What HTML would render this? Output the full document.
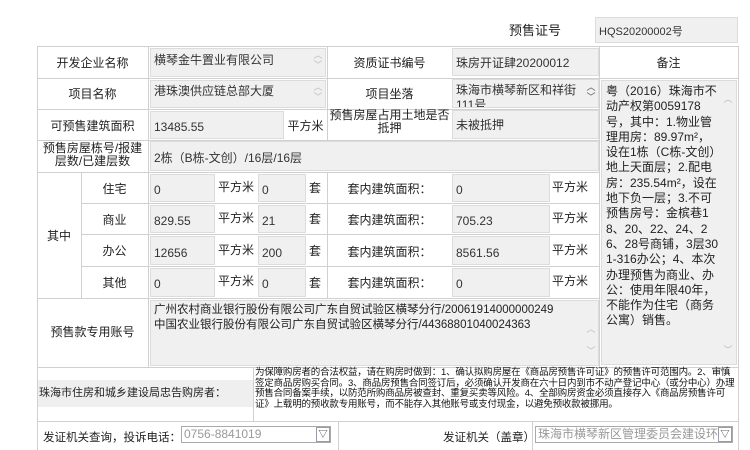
<!DOCTYPE html>
<html><head><meta charset="utf-8"><style>
*{margin:0;padding:0;box-sizing:border-box}
body{width:750px;height:450px;background:#fff;position:relative;overflow:hidden;font-family:"Liberation Sans","Noto Sans CJK SC",sans-serif;font-size:12px;color:#222}
.a{position:absolute}
.h{position:absolute;height:1px;background:#d0d0d0}
.v{position:absolute;width:1px;background:#d0d0d0}
.in{position:absolute;background:#f0f0f0;border:1px solid #dcdcdc;color:#333;padding-left:3px;white-space:nowrap;overflow:hidden}
.c{position:absolute;text-align:center;white-space:nowrap}
.sb{position:absolute;color:#bbb;font-size:9px;line-height:10px;text-align:center;width:12px}
</style></head><body>
<div class="c" style="left:500px;top:20px;width:70px;font-size:13px">预售证号</div>
<div class="in" style="left:595px;top:17px;width:143px;height:26px;line-height:28px;font-size:11px">HQS20200002号</div>

<div class="h" style="left:37px;top:46px;width:702px"></div>
<div class="h" style="left:37px;top:78px;width:702px"></div>
<div class="h" style="left:37px;top:109px;width:562px"></div>
<div class="h" style="left:37px;top:140px;width:562px"></div>
<div class="h" style="left:37px;top:172px;width:562px"></div>
<div class="h" style="left:81px;top:203px;width:518px"></div>
<div class="h" style="left:81px;top:234px;width:518px"></div>
<div class="h" style="left:81px;top:266px;width:518px"></div>
<div class="h" style="left:37px;top:298px;width:562px"></div>
<div class="h" style="left:37px;top:367px;width:702px"></div>
<div class="h" style="left:37px;top:421px;width:702px"></div>
<div class="v" style="left:37px;top:46px;height:404px"></div>
<div class="v" style="left:738px;top:46px;height:404px"></div>
<div class="v" style="left:148px;top:46px;height:321px"></div>
<div class="v" style="left:81px;top:172px;height:126px"></div>
<div class="v" style="left:327px;top:46px;height:94px"></div>
<div class="v" style="left:327px;top:172px;height:126px"></div>
<div class="v" style="left:599px;top:46px;height:321px"></div>
<div class="v" style="left:253px;top:367px;height:54px"></div>
<div class="v" style="left:338px;top:421px;height:29px"></div>
<div class="v" style="left:532px;top:421px;height:29px"></div>

<div class="c" style="left:37px;top:54px;width:111px">开发企业名称</div>
<div class="in" style="left:150px;top:48px;width:176px;height:29px;line-height:22px">横琴金牛置业有限公司</div>
<div class="sb" style="left:312px;top:50px">︿<br>﹀</div>
<div class="c" style="left:327px;top:54px;width:125px">资质证书编号</div>
<div class="in" style="left:452px;top:48px;width:147px;height:28px;line-height:28px">珠房开证肆20200012</div>
<div class="c" style="left:599px;top:54px;width:139px">备注</div>

<div class="c" style="left:37px;top:85px;width:111px">项目名称</div>
<div class="in" style="left:150px;top:80px;width:176px;height:28px;line-height:20px">港珠澳供应链总部大厦</div>
<div class="sb" style="left:312px;top:82px">︿<br>﹀</div>
<div class="c" style="left:327px;top:85px;width:125px">项目坐落</div>
<div class="in" style="left:452px;top:79px;width:147px;height:29px;line-height:15px;padding-top:3px;white-space:normal;padding-right:16px">珠海市横琴新区和祥街111号</div>
<div class="sb" style="left:585px;top:82px;color:#555">︿<br>﹀</div>

<div class="c" style="left:37px;top:117px;width:111px">可预售建筑面积</div>
<div class="in" style="left:150px;top:111px;width:134px;height:28px;line-height:30px">13485.55</div>
<div class="c" style="left:284px;top:117px;width:43px">平方米</div>
<div class="c" style="left:327px;top:109px;width:125px;line-height:13px">预售房屋占用土地是否<br>抵押</div>
<div class="in" style="left:452px;top:110px;width:147px;height:29px;line-height:29px">未被抵押</div>

<div class="c" style="left:37px;top:142px;width:111px;line-height:13px">预售房屋栋号/报建<br>层数/已建层数</div>
<div class="in" style="left:150px;top:141px;width:449px;height:30px;line-height:32px">2栋（B栋-文创）/16层/16层</div>

<div class="c" style="left:37px;top:227px;width:44px">其中</div>
<div class="c" style="left:81px;top:180px;width:67px">住宅</div>
<div class="c" style="left:81px;top:211px;width:67px">商业</div>
<div class="c" style="left:81px;top:242px;width:67px">办公</div>
<div class="c" style="left:81px;top:274px;width:67px">其他</div>

<div class="in" style="left:150px;top:174px;width:65px;height:28px;line-height:30px">0</div>
<div class="in" style="left:150px;top:205px;width:65px;height:28px;line-height:30px">829.55</div>
<div class="in" style="left:150px;top:236px;width:65px;height:29px;line-height:32px">12656</div>
<div class="in" style="left:150px;top:268px;width:65px;height:29px;line-height:30px">0</div>
<div class="a" style="left:218px;top:178px">平方米</div>
<div class="a" style="left:218px;top:209px">平方米</div>
<div class="a" style="left:218px;top:241px">平方米</div>
<div class="a" style="left:218px;top:272px">平方米</div>
<div class="in" style="left:258px;top:174px;width:48px;height:28px;line-height:30px">0</div>
<div class="in" style="left:258px;top:205px;width:48px;height:28px;line-height:30px">21</div>
<div class="in" style="left:258px;top:236px;width:48px;height:29px;line-height:32px">200</div>
<div class="in" style="left:258px;top:268px;width:48px;height:29px;line-height:30px">0</div>
<div class="a" style="left:309px;top:179px">套</div>
<div class="a" style="left:309px;top:210px">套</div>
<div class="a" style="left:309px;top:242px">套</div>
<div class="a" style="left:309px;top:274px">套</div>
<div class="c" style="left:327px;top:180px;width:125px">套内建筑面积：</div>
<div class="c" style="left:327px;top:211px;width:125px">套内建筑面积：</div>
<div class="c" style="left:327px;top:243px;width:125px">套内建筑面积：</div>
<div class="c" style="left:327px;top:274px;width:125px">套内建筑面积：</div>
<div class="in" style="left:452px;top:174px;width:98px;height:28px;line-height:30px">0</div>
<div class="in" style="left:452px;top:205px;width:98px;height:28px;line-height:30px">705.23</div>
<div class="in" style="left:452px;top:236px;width:98px;height:29px;line-height:32px">8561.56</div>
<div class="in" style="left:452px;top:268px;width:98px;height:29px;line-height:30px">0</div>
<div class="a" style="left:552px;top:178px">平方米</div>
<div class="a" style="left:552px;top:209px">平方米</div>
<div class="a" style="left:552px;top:241px">平方米</div>
<div class="a" style="left:552px;top:272px">平方米</div>

<div class="c" style="left:37px;top:323px;width:111px">预售款专用账号</div>
<div class="in" style="left:150px;top:300px;width:449px;height:66px;line-height:15px;padding-top:2px;font-size:11.5px;color:#222">广州农村商业银行股份有限公司广东自贸试验区横琴分行/20061914000000249<br>中国农业银行股份有限公司广东自贸试验区横琴分行/44368801040024363</div>
<div class="sb" style="left:585px;top:318px;height:48px;line-height:22px">︿<br>﹀</div>

<div class="in" style="left:601px;top:80px;width:136px;height:285px;padding:3px 16px 0 4px;white-space:normal;line-height:15.3px;color:#222;font-size:12px;word-break:break-all">粤（2016）珠海市不动产权第0059178号，其中：1.物业管理用房：89.97m²，设在1栋（C栋-文创）地上天面层；2.配电房：235.54m²，设在地下负一层；3.不可预售房号：金槟巷18、20、22、24、26、28号商铺，3层301-316办公；4、本次办理预售为商业、办公：使用年限40年，不能作为住宅（商务公寓）销售。</div>
<div class="sb" style="left:722px;top:94px">︿</div>
<div class="sb" style="left:722px;top:345px">﹀</div>

<div class="a" style="left:38px;top:380px;width:215px;height:27px;background:#efefef;line-height:27px;padding-left:1px;font-size:11px;white-space:nowrap">珠海市住房和城乡建设局忠告购房者：</div>
<div class="a" style="left:255px;top:368px;width:483px;font-size:9.5px;line-height:10.5px;color:#111;letter-spacing:-0.2px">为保障购房者的合法权益，请在购房时做到：1、确认拟购房屋在《商品房预售许可证》的预售许可范围内。2、审慎签定商品房购买合同。3、商品房预售合同签订后，必须确认开发商在六十日内到市不动产登记中心（或分中心）办理预售合同备案手续，以防范所购商品房被查封、重复买卖等风险。4、全部购房资金必须直接存入《商品房预售许可证》上载明的预收款专用账号，而不能存入其他账号或支付现金，以避免预收款被挪用。</div>

<div class="a" style="left:43px;top:429px;font-size:11.5px">发证机关查询，投诉电话：</div>
<div class="a" style="left:181px;top:426px;width:150px;height:17px;border:1px solid #aaa;color:#999;line-height:15px;padding-left:2px">0756-8841019</div>
<div class="a" style="left:316px;top:427px;width:14px;height:15px;border:1px solid #99a;font-size:9px;line-height:13px;text-align:center;color:#333">▽</div>
<div class="a" style="left:443px;top:429px;font-size:11.5px">发证机关（盖章）</div>
<div class="a" style="left:535px;top:426px;width:198px;height:17px;border:1px solid #aaa;color:#999;line-height:15px;padding-left:2px;overflow:hidden;white-space:nowrap">珠海市横琴新区管理委员会建设环</div>
<div class="a" style="left:718px;top:427px;width:14px;height:15px;border:1px solid #99a;background:#fff;font-size:9px;line-height:13px;text-align:center;color:#333">▽</div>
</body></html>
